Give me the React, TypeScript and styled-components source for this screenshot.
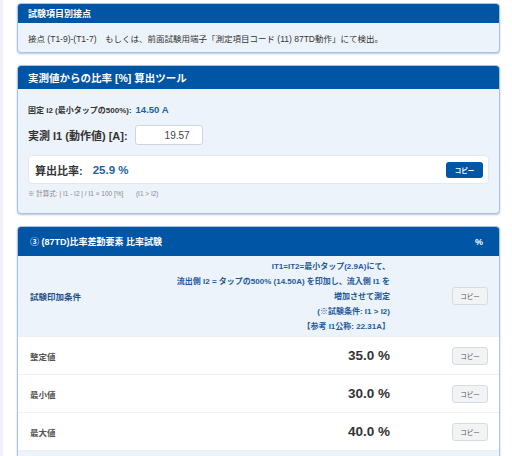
import React from "react";
import styled, { createGlobalStyle } from "styled-components";

const Global = createGlobalStyle`
  html, body { margin: 0; padding: 0; background: #eef1f5; }
  body { font-family: "Liberation Sans", "Noto Sans CJK JP", sans-serif; color: #333; }
  * { box-sizing: border-box; }
`;

const Page = styled.div`
  margin-left: 3px;
  background: #ffffff;
  padding: 3px 12px 0 14px;
  display: flex;
  flex-direction: column;
  gap: 12px;
  min-height: 456px;
`;

const Card = styled.section`
  border: 1px solid #a9c3e3;
  border-radius: 4px;
  background: #edf3fb;
  box-shadow: 0 1px 2px rgba(40, 90, 160, 0.35);
  overflow: hidden;
`;

const CardHeader = styled.div<{ $h: number; $size: number; $pad: number }>`
  height: ${(p) => p.$h}px;
  background: #0055a5;
  color: #fff;
  font-weight: 700;
  font-size: ${(p) => p.$size}px;
  display: flex;
  align-items: center;
  justify-content: space-between;
  padding: 0 16px 0 ${(p) => p.$pad}px;
`;

const Body1 = styled.div`
  height: 29px;
  display: flex;
  align-items: center;
  padding: 0 10px;
  font-size: 8.5px;
  color: #333;
`;

const Body2 = styled.div`
  padding: 15px 10px 0 10px;
  height: 124px;
  display: flex;
  flex-direction: column;
`;

const FixedLine = styled.div`
  font-size: 8px;
  font-weight: 700;
  color: #333;
  display: flex;
  align-items: baseline;
  gap: 4px;
`;

const BlueVal = styled.span<{ $size: number }>`
  color: #1a5fa8;
  font-weight: 700;
  font-size: ${(p) => p.$size}px;
`;

const InputRow = styled.div`
  margin-top: 10px;
  display: flex;
  align-items: center;
  gap: 7px;
`;

const InputLabel = styled.label`
  font-size: 11px;
  font-weight: 700;
  color: #333;
`;

const NumInput = styled.input`
  width: 68px;
  height: 20px;
  border: 1px solid #d0d5db;
  border-radius: 3px;
  background: #fff;
  text-align: right;
  padding: 0 12px 0 4px;
  font-family: "Liberation Sans", sans-serif;
  font-size: 10px;
  color: #444;
  outline: none;
`;

const ResultBox = styled.div`
  margin-top: 10px;
  height: 29px;
  background: #fff;
  border: 1px solid #e3e8ee;
  border-radius: 4px;
  display: flex;
  align-items: center;
  padding: 0 5px 0 6px;
  gap: 10px;
`;

const ResultLabel = styled.span`
  font-size: 11px;
  font-weight: 700;
  color: #333;
`;

const Spacer = styled.div`
  flex: 1;
`;

const BlueButton = styled.button`
  width: 37px;
  height: 16px;
  background: #0055a5;
  border: none;
  border-radius: 3px;
  color: #fff;
  font-size: 6.5px;
  font-weight: 700;
  font-family: "Noto Sans CJK JP", sans-serif;
  padding: 0;
`;

const Note = styled.div`
  margin-top: 4px;
  font-size: 6.5px;
  color: #888;
  white-space: pre;
`;

const Row = styled.div<{ $tint?: boolean; $h: number }>`
  display: grid;
  grid-template-columns: 1fr auto 109px;
  align-items: center;
  height: ${(p) => p.$h}px;
  background: ${(p) => (p.$tint ? "#edf3fb" : "#ffffff")};
  border-bottom: 1px solid #eef1f4;
`;

const RowLabel = styled.div<{ $blue?: boolean }>`
  padding-left: 12px;
  font-size: 8.5px;
  font-weight: 700;
  color: ${(p) => (p.$blue ? "#1f4f8a" : "#555")};
`;

const CondText = styled.div`
  text-align: right;
  font-size: 8px;
  font-weight: 700;
  color: #1f5a9a;
  line-height: 15px;
`;

const Value = styled.div`
  text-align: right;
  font-size: 13.5px;
  font-weight: 700;
  color: #333;
`;

const BtnCell = styled.div`
  display: flex;
  justify-content: flex-end;
  padding-right: 11px;
`;

const GrayButton = styled.button`
  width: 36px;
  height: 18px;
  background: #f1f3f5;
  border: 1px solid #d6dbe1;
  border-radius: 3px;
  color: #555;
  font-size: 6.5px;
  font-family: "Noto Sans CJK JP", sans-serif;
  padding: 0;
`;

const Tail = styled.div`
  height: 10px;
  background: #edf3fb;
`;

const rows = [
  { label: "整定値", value: "35.0 %" },
  { label: "最小値", value: "30.0 %" },
  { label: "最大値", value: "40.0 %" },
];

export default function App() {
  return (
    <>
      <Global />
      <Page>
        <Card>
          <CardHeader $h={19} $size={9} $pad={10}>試験項目別接点</CardHeader>
          <Body1>
            接点 (T1-9)-(T1-7)　もしくは、前面試験用端子「測定項目コード (11) 87TD動作」にて検出。
          </Body1>
        </Card>

        <Card>
          <CardHeader $h={23} $size={10.5} $pad={10}>実測値からの比率 [%] 算出ツール</CardHeader>
          <Body2>
            <FixedLine>
              固定 I2 (最小タップの500%): <BlueVal $size={9.5}>14.50 A</BlueVal>
            </FixedLine>
            <InputRow>
              <InputLabel>実測 I1 (動作値) [A]:</InputLabel>
              <NumInput defaultValue="19.57" />
            </InputRow>
            <ResultBox>
              <ResultLabel>算出比率:</ResultLabel>
              <BlueVal $size={11.5}>25.9 %</BlueVal>
              <Spacer />
              <BlueButton>コピー</BlueButton>
            </ResultBox>
            <Note>{"※ 計算式: | I1 - I2 | / I1 × 100 [%]       (I1 > I2)"}</Note>
          </Body2>
        </Card>

        <Card>
          <CardHeader $h={29} $size={9} $pad={12}>
            <span>③ (87TD)比率差動要素 比率試験</span>
            <span>%</span>
          </CardHeader>
          <Row $tint $h={81}>
            <RowLabel $blue>試験印加条件</RowLabel>
            <CondText>
              IT1=IT2=最小タップ(2.9A)にて、
              <br />
              流出側 I2 = タップの500% (14.50A) を印加し、流入側 I1 を
              <br />
              増加させて測定
              <br />
              (※試験条件: I1 &gt; I2)
              <br />
              【参考 I1公称: 22.31A】
            </CondText>
            <BtnCell>
              <GrayButton>コピー</GrayButton>
            </BtnCell>
          </Row>
          {rows.map((r) => (
            <Row key={r.label} $h={38}>
              <RowLabel>{r.label}</RowLabel>
              <Value>{r.value}</Value>
              <BtnCell>
                <GrayButton>コピー</GrayButton>
              </BtnCell>
            </Row>
          ))}
          <Tail />
        </Card>
      </Page>
    </>
  );
}
